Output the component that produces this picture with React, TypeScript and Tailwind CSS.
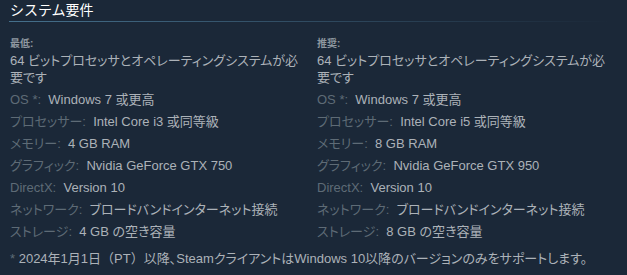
const minReq = [
  { label: "OS *:", value: "Windows 7 或更高" },
  { label: "プロセッサー:", value: "Intel Core i3 或同等級" },
  { label: "メモリー:", value: "4 GB RAM" },
  { label: "グラフィック:", value: "Nvidia GeForce GTX 750" },
  { label: "DirectX:", value: "Version 10" },
  { label: "ネットワーク:", value: "ブロードバンドインターネット接続" },
  { label: "ストレージ:", value: "4 GB の空き容量" },
];

const recReq = [
  { label: "OS *:", value: "Windows 7 或更高" },
  { label: "プロセッサー:", value: "Intel Core i5 或同等級" },
  { label: "メモリー:", value: "8 GB RAM" },
  { label: "グラフィック:", value: "Nvidia GeForce GTX 950" },
  { label: "DirectX:", value: "Version 10" },
  { label: "ネットワーク:", value: "ブロードバンドインターネット接続" },
  { label: "ストレージ:", value: "8 GB の空き容量" },
];

function ReqColumn({ title, rows }: { title: string; rows: { label: string; value: string }[] }) {
  return (
    <div className="w-[307px] shrink-0">
      <div className="text-[10px] font-bold text-[#8f98a0] leading-[14px]">{title}</div>
      <ul className="mt-[1px] text-[13px] leading-[17px] text-[#acb2b8] [font-feature-settings:'palt']">
        <li className="mb-[5px]">
          64 ビットプロセッサとオペレーティングシステムが必
          <br />
          要です
        </li>
        {rows.map((r) => (
          <li key={r.label} className="mb-[5px]">
            <span className="text-[#5e6b76]">{r.label}</span>&nbsp;&nbsp;{r.value}
          </li>
        ))}
      </ul>
    </div>
  );
}

export default function App() {
  return (
    <div
      className="w-[627px] h-[275px] overflow-hidden bg-[#1b2838]"
      style={{ fontFamily: '"Liberation Sans", "Noto Sans CJK JP", sans-serif' }}
    >
      <h2 className="pl-[10px] pt-[1px] text-[14px] leading-[18px] text-white">システム要件</h2>
      <div className="mt-[2px] ml-[9px] w-[602px] h-px bg-gradient-to-r from-[#45708c] to-[#1b2838]" />
      <div className="flex pl-[10px] pt-[15px]">
        <ReqColumn title="最低:" rows={minReq} />
        <ReqColumn title="推奨:" rows={recReq} />
      </div>
      <p className="pl-[10px] mt-[5px] text-[13px] leading-[17px] text-[#acb2b8] whitespace-nowrap [font-feature-settings:'palt']">
        <span className="text-[#5e6b76]">*</span> 2024年1月1日
        <span className="[font-feature-settings:normal]">（</span>PT
        <span className="[font-feature-settings:normal]">）</span>以降、SteamクライアントはWindows 10以降のバージョンのみをサポートします。
      </p>
    </div>
  );
}
